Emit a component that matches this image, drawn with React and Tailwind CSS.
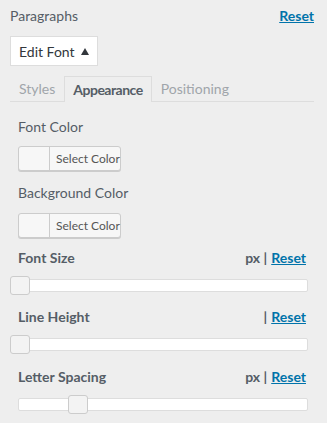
import React from 'react';

function ColorButton() {
    return (
        <button className="flex h-[25px] w-[103px] items-stretch rounded-[3px] border border-[#cccccc] bg-[#f7f7f7] shadow-[0_1px_0_#cccccc]">
            <span className="w-[31px] border-r border-[#cccccc]"></span>
            <span className="flex flex-1 items-center pl-[6px] text-[12px] text-[#555555]">Select Color</span>
        </button>
    );
}

function SliderRow({ label, unit, pos, top }) {
    return (
        <div>
            <div className={`flex items-center justify-between text-[14px] font-bold leading-[18px] text-[#555d66] ${top}`}>
                <span>{label}</span>
                <span>
                    {unit}
                    <span className="ml-[4px] text-[#0073aa] underline">Reset</span>
                </span>
            </div>
            {/* Slider */}
            <div className="relative -mr-[2px] mt-[9px] flex h-[19px] items-center">
                <div className="h-[13px] w-full rounded-[2px] border border-[#dddddd] bg-white"></div>
                <div
                    className="absolute top-0 h-[19px] w-[20px] rounded-[3px] border border-[#cccccc] bg-[#f3f3f3]"
                    style={{ left: pos - 8 }}
                ></div>
            </div>
        </div>
    );
}

export default function App() {
    return (
        <div className="h-[423px] w-[327px] overflow-hidden bg-[#eeeeee] pl-[10px] pr-[13px] pt-[7px] font-['Lato',sans-serif]">
            {/* Header */}
            <div className="flex h-[18px] items-center justify-between text-[14px] leading-[18px]">
                <span className="text-[#555d66]">Paragraphs</span>
                <span className="font-bold text-[#0073aa] underline">Reset</span>
            </div>

            <div className="mt-[11px] inline-flex h-[30px] w-[88px] items-center justify-between border border-[#dddddd] bg-white pl-[8px] pr-[8px] text-[14px] text-[#32373c]">
                <span>Edit Font</span>
                <svg width="8" height="7" viewBox="0 0 8 7">
                    <path d="M4 0 L8 7 L0 7 Z" fill="#32373c" />
                </svg>
            </div>

            {/* Tabs */}
            <div className="mt-[10px] flex border-b border-[#dddddd] text-[14px]">
                <div className="flex h-[25px] items-center border border-transparent px-[8px] text-[#a0a5aa]">Styles</div>
                <div className="-mb-px flex h-[26px] items-center border border-b-0 border-[#dddddd] bg-[#eeeeee] px-[8px] font-bold tracking-[-0.5px] text-[#555d66]">Appearance</div>
                <div className="flex h-[25px] items-center border border-transparent px-[8px] text-[#a0a5aa]">Positioning</div>
            </div>

            {/* Appearance panel */}
            <div className="px-[8px]">
                <div className="mt-[16px] text-[14px] leading-[18px] text-[#555d66]">Font Color</div>
                <div className="mt-[10px]">
                    <ColorButton />
                </div>
                <div className="mt-[13px] text-[14px] leading-[18px] text-[#555d66]">Background Color</div>
                <div className="mt-[11px]">
                    <ColorButton />
                </div>

                <SliderRow label="Font Size" unit="px |" pos={0} top="mt-[11px]" />
                <SliderRow label="Line Height" unit="|" pos={0} top="mt-[13px]" />
                <SliderRow label="Letter Spacing" unit="px |" pos={58} top="mt-[14px]" />
            </div>
        </div>
    );
}
